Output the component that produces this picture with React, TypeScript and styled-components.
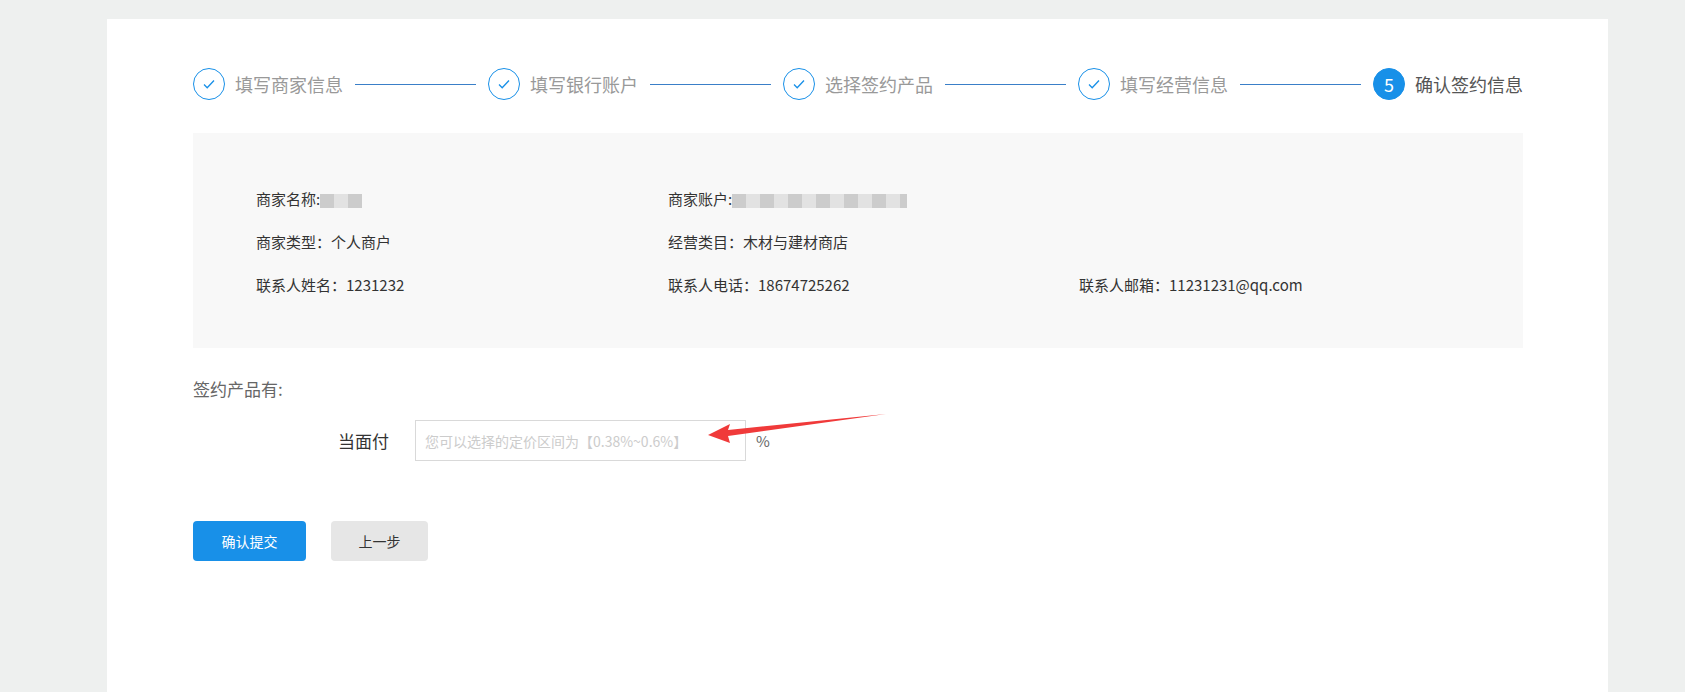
import styled, { createGlobalStyle } from 'styled-components'

const Global = createGlobalStyle`
  body { margin: 0; background: #eef0ef; font-family: "Noto Sans CJK SC", "Open Sans", sans-serif; }
`

const Card = styled.div`
  margin: 19px 77px 0 107px;
  background: #fff;
  min-height: 673px;
  padding: 47px 85px 0 86px;
  box-sizing: border-box;
`

const Steps = styled.div`
  display: flex;
  align-items: center;
  height: 36px;
`

const Step = styled.div`
  display: flex;
  align-items: center;
  gap: 10px;
  flex-shrink: 0;
`

const Circle = styled.div<{ $active?: boolean }>`
  width: 32px;
  height: 32px;
  border-radius: 50%;
  box-sizing: border-box;
  border: 1px solid #1890e8;
  background: ${p => (p.$active ? '#1890e8' : '#fff')};
  color: #fff;
  display: flex;
  align-items: center;
  justify-content: center;
  font-size: 18px;
`

const StepLabel = styled.span<{ $active?: boolean }>`
  font-size: 18px;
  color: ${p => (p.$active ? '#555' : '#999')};
`

const Line = styled.div`
  flex: 1;
  height: 1px;
  background: #3a7fc8;
  margin: 0 12px;
`

const InfoBox = styled.div`
  margin-top: 31px;
  background: #f8f8f8;
  height: 215px;
  box-sizing: border-box;
  padding: 55px 0 0 63px;
  display: grid;
  grid-template-columns: 412px 411px 1fr;
  grid-auto-rows: 43px;
  font-size: 15px;
  color: #333;
`

const Blur = styled.span<{ $w: number }>`
  display: inline-block;
  vertical-align: middle;
  width: ${p => p.$w}px;
  height: 14px;
  background: repeating-linear-gradient(90deg, #ccc 0 14px, #e2e2e2 14px 28px);
  filter: blur(0.6px);
`

const Section = styled.div`
  margin-top: 28px;
  font-size: 17px;
  color: #666;
`

const FieldRow = styled.div`
  margin-top: 19px;
  display: flex;
  align-items: center;
  padding-left: 145px;
  position: relative;
`

const FieldLabel = styled.span`
  font-size: 17px;
  color: #333;
  width: 77px;
`

const Input = styled.input`
  width: 331px;
  height: 41px;
  box-sizing: border-box;
  border: 1px solid #d9d9d9;
  padding: 0 9px;
  font-size: 14px;
  font-family: inherit;
  &::placeholder { color: #ccc; }
`

const Unit = styled.span`
  margin-left: 10px;
  font-size: 15px;
  color: #666;
`

const Arrow = styled.svg`
  position: absolute;
  left: 515px;
  top: -6px;
`

const Buttons = styled.div`
  margin-top: 60px;
  display: flex;
  gap: 25px;
`

const Button = styled.button<{ $primary?: boolean }>`
  height: 40px;
  width: ${p => (p.$primary ? 113 : 97)}px;
  border: none;
  border-radius: 4px;
  font-family: inherit;
  font-size: 14px;
  background: ${p => (p.$primary ? '#1890e8' : '#e6e6e6')};
  color: ${p => (p.$primary ? '#fff' : '#333')};
`

const Check = () => (
  <svg width="16" height="16" viewBox="0 0 16 16" fill="none" stroke="#1890e8" strokeWidth="1.3">
    <path d="M3 8.5l3.2 3.2L13 4.5" />
  </svg>
)

const steps = ['填写商家信息', '填写银行账户', '选择签约产品', '填写经营信息']

export default function App() {
  return (
    <>
      <Global />
      <Card>
        <Steps>
          {steps.map(s => (
            <>
              <Step key={s}>
                <Circle><Check /></Circle>
                <StepLabel>{s}</StepLabel>
              </Step>
              <Line />
            </>
          ))}
          <Step>
            <Circle $active>5</Circle>
            <StepLabel $active>确认签约信息</StepLabel>
          </Step>
        </Steps>
        <InfoBox>
          <div>商家名称:<Blur $w={42} /></div>
          <div>商家账户:<Blur $w={175} /></div>
          <div />
          <div>商家类型：个人商户</div>
          <div>经营类目：木材与建材商店</div>
          <div />
          <div>联系人姓名：1231232</div>
          <div>联系人电话：18674725262</div>
          <div>联系人邮箱：11231231@qq.com</div>
        </InfoBox>
        <Section>签约产品有:</Section>
        <FieldRow>
          <FieldLabel>当面付</FieldLabel>
          <Input placeholder="您可以选择的定价区间为【0.38%~0.6%】" />
          <Unit>%</Unit>
          <Arrow width="180" height="30" viewBox="0 0 180 30">
            <path d="M0 21 L22 10 L20 16 L178 0 L20 22 L22 29 Z" fill="#f03a3a" />
          </Arrow>
        </FieldRow>
        <Buttons>
          <Button $primary>确认提交</Button>
          <Button>上一步</Button>
        </Buttons>
      </Card>
    </>
  )
}
